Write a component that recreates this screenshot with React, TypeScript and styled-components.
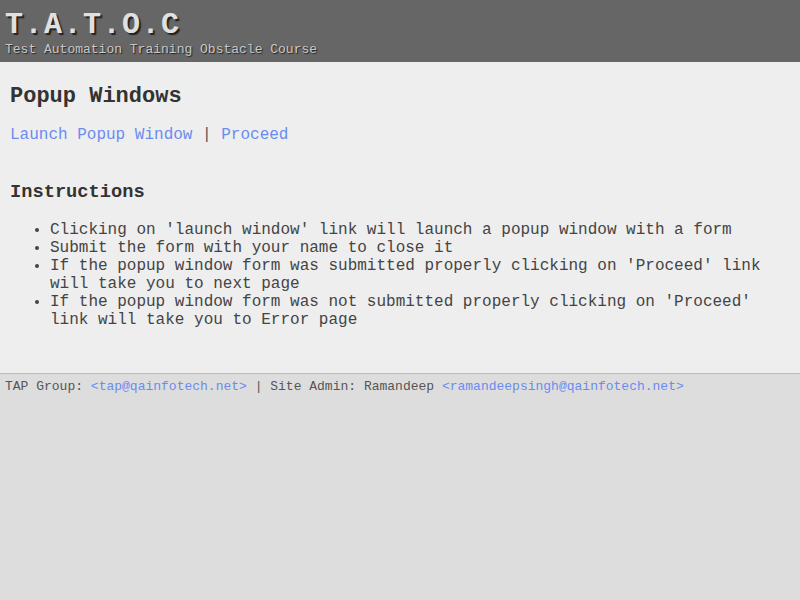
import styled, { createGlobalStyle } from "styled-components";

const GlobalStyle = createGlobalStyle`
  html, body {
    margin: 0;
    padding: 0;
    background: #dddddd;
    font-family: "Courier New", Courier, "Nimbus Mono PS", "Liberation Mono", monospace;
  }
`;

const Header = styled.header`
  background: #666666;
  padding: 9px 5px 0 5px;
  height: 62px;
  box-sizing: border-box;
`;

const Title = styled.div`
  font-size: 30px;
  font-weight: bold;
  letter-spacing: 1.5px;
  color: #e0e0e0;
  text-shadow: 2px 2px 1px #222;
  line-height: 33px;
`;

const Subtitle = styled.div`
  font-size: 13px;
  color: #c8c8c8;
  text-shadow: 1px 1px 1px #222;
  line-height: 16px;
`;

const Main = styled.main`
  background: #eeeeee;
  padding: 12px 10px 44px 10px;
  border-bottom: 1px solid #bbbbbb;
  color: #333333;
`;

const PageTitle = styled.h2`
  font-size: 22px;
  font-weight: bold;
  margin: 10px 0 0 0;
`;

const SubTitle = styled.h3`
  font-size: 18.72px;
  font-weight: bold;
  margin: 37px 0 0 0;
`;

const LinkRow = styled.p`
  font-size: 16px;
  color: #555;
  margin: 17px 0 0 0;
`;

const Link = styled.a`
  color: #6a8cf0;
  text-decoration: none;
`;

const List = styled.ul`
  margin: 18px 0 0 0;
  padding-left: 40px;
  font-size: 16px;
  line-height: 18px;
  color: #444444;
`;

const Footer = styled.footer`
  padding: 5px 5px 4px 5px;
  font-size: 13px;
  color: #555555;
`;

const FooterLink = styled.a`
  color: #6a8cf0;
  text-decoration: none;
`;

export default function App() {
  return (
    <>
      <GlobalStyle />
      <Header>
        <Title>T.A.T.O.C</Title>
        <Subtitle>Test Automation Training Obstacle Course</Subtitle>
      </Header>
      <Main>
        <PageTitle>Popup Windows</PageTitle>
        <LinkRow>
          <Link href="#">Launch Popup Window</Link> | <Link href="#">Proceed</Link>
        </LinkRow>
        <SubTitle>Instructions</SubTitle>
        <List>
          <li>Clicking on 'launch window' link will launch a popup window with a form</li>
          <li>Submit the form with your name to close it</li>
          <li>If the popup window form was submitted properly clicking on 'Proceed' link will take you to next page</li>
          <li>If the popup window form was not submitted properly clicking on 'Proceed' link will take you to Error page</li>
        </List>
      </Main>
      <Footer>
        TAP Group: <FooterLink href="#">&lt;tap@qainfotech.net&gt;</FooterLink> | Site Admin: Ramandeep{" "}
        <FooterLink href="#">&lt;ramandeepsingh@qainfotech.net&gt;</FooterLink>
      </Footer>
    </>
  );
}
